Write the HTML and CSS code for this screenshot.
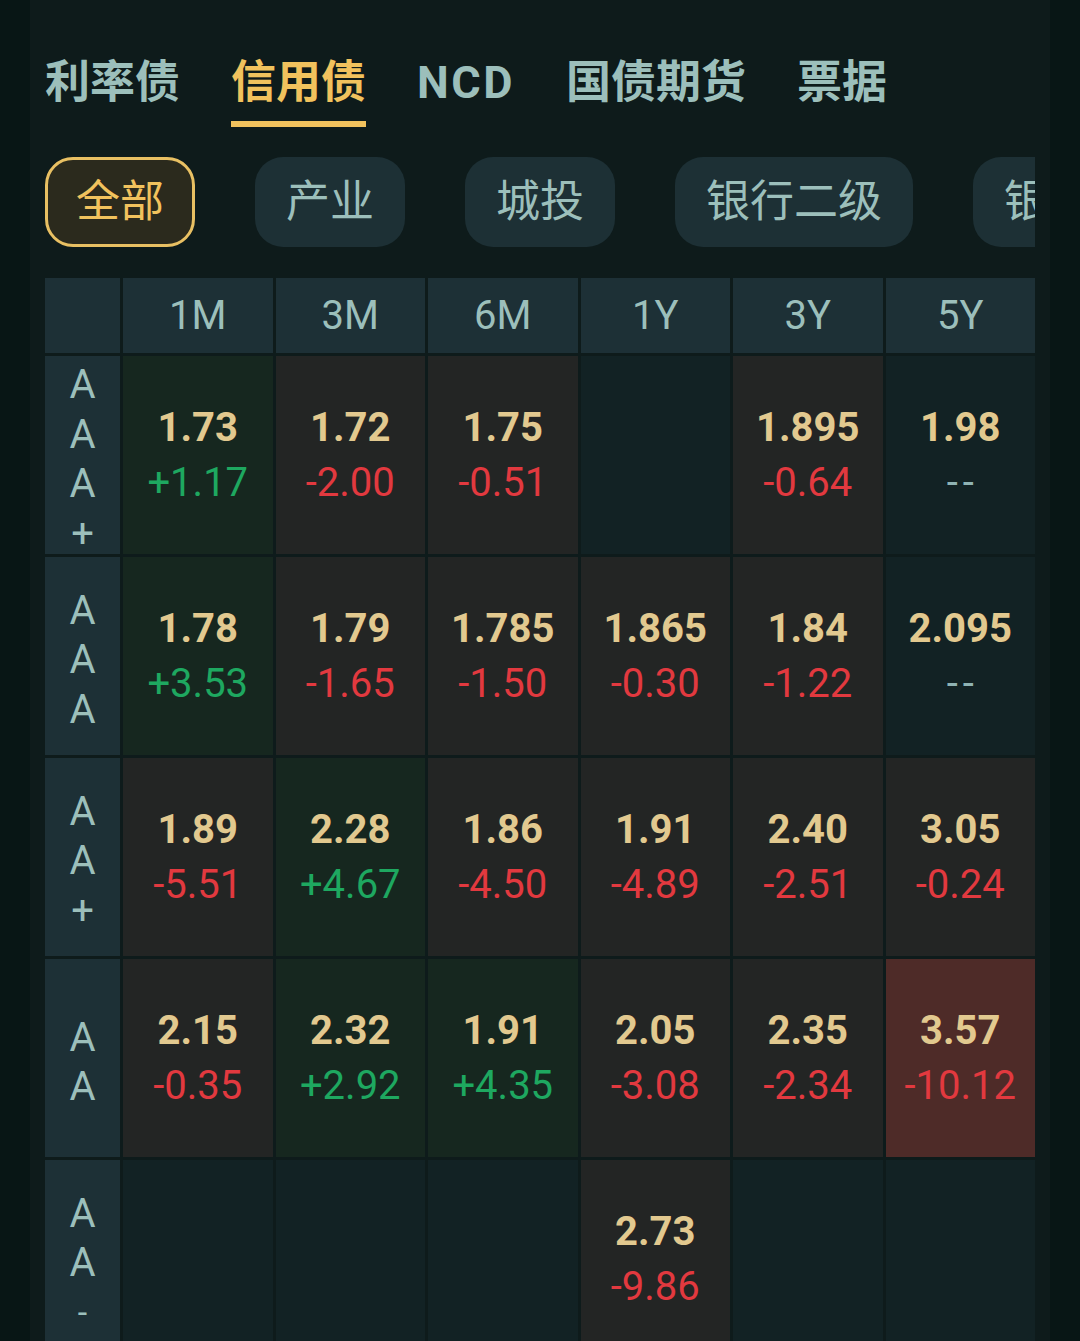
FILE: index.html
```html
<!DOCTYPE html>
<html lang="zh-CN">
<head>
    <meta charset="UTF-8">
    <meta name="viewport" content="width=device-width, initial-scale=1.0">
    <title>信用债</title>
    <link rel="stylesheet" href="styles.css">
</head>
<body>
<div class="screen">

    <!-- 顶部分类 -->
    <div class="tabs">
        <div class="tab">利率债</div>
        <div class="tab active">信用债</div>
        <div class="tab latin">NCD</div>
        <div class="tab">国债期货</div>
        <div class="tab">票据</div>
    </div>

    <!-- 子分类 -->
    <div class="chips">
        <div class="chip active">全部</div>
        <div class="chip">产业</div>
        <div class="chip">城投</div>
        <div class="chip">银行二级</div>
        <div class="chip">银行永续</div>
    </div>

    <!-- 收益率表 -->
    <div class="grid">
        <div class="head"></div>
        <div class="head">1M</div>
        <div class="head">3M</div>
        <div class="head">6M</div>
        <div class="head">1Y</div>
        <div class="head">3Y</div>
        <div class="head">5Y</div>

        <div class="rating"><span>A</span><span>A</span><span>A</span><span>+</span></div>
        <div class="cell up"><b>1.73</b><span class="g">+1.17</span></div>
        <div class="cell"><b>1.72</b><span class="r">-2.00</span></div>
        <div class="cell"><b>1.75</b><span class="r">-0.51</span></div>
        <div class="cell empty"></div>
        <div class="cell"><b>1.895</b><span class="r">-0.64</span></div>
        <div class="cell empty"><b>1.98</b><span class="na">--</span></div>

        <div class="rating"><span>A</span><span>A</span><span>A</span></div>
        <div class="cell up"><b>1.78</b><span class="g">+3.53</span></div>
        <div class="cell"><b>1.79</b><span class="r">-1.65</span></div>
        <div class="cell"><b>1.785</b><span class="r">-1.50</span></div>
        <div class="cell"><b>1.865</b><span class="r">-0.30</span></div>
        <div class="cell"><b>1.84</b><span class="r">-1.22</span></div>
        <div class="cell empty"><b>2.095</b><span class="na">--</span></div>

        <div class="rating"><span>A</span><span>A</span><span>+</span></div>
        <div class="cell"><b>1.89</b><span class="r">-5.51</span></div>
        <div class="cell up"><b>2.28</b><span class="g">+4.67</span></div>
        <div class="cell"><b>1.86</b><span class="r">-4.50</span></div>
        <div class="cell"><b>1.91</b><span class="r">-4.89</span></div>
        <div class="cell"><b>2.40</b><span class="r">-2.51</span></div>
        <div class="cell"><b>3.05</b><span class="r">-0.24</span></div>

        <div class="rating"><span>A</span><span>A</span></div>
        <div class="cell"><b>2.15</b><span class="r">-0.35</span></div>
        <div class="cell up"><b>2.32</b><span class="g">+2.92</span></div>
        <div class="cell up"><b>1.91</b><span class="g">+4.35</span></div>
        <div class="cell"><b>2.05</b><span class="r">-3.08</span></div>
        <div class="cell"><b>2.35</b><span class="r">-2.34</span></div>
        <div class="cell down"><b>3.57</b><span class="r">-10.12</span></div>

        <div class="rating"><span>A</span><span>A</span><span class="minus">-</span></div>
        <div class="cell empty"></div>
        <div class="cell empty"></div>
        <div class="cell empty"></div>
        <div class="cell"><b>2.73</b><span class="r">-9.86</span></div>
        <div class="cell empty"></div>
        <div class="cell empty"></div>
    </div>

</div>
</body>
</html>
```

FILE: styles.css
```css
html, body {
    margin: 0;
    background-color: #081615;
}
body {
    font-family: Roboto, "Noto Sans CJK SC", sans-serif;
    color: #9cbfbb;
    overflow: hidden;
    height: 1341px;
}
.screen {
    margin-left: 30px;
    width: 990px;
    min-height: 1341px;
    padding: 0 15px;
    background-color: #0e1b1b;
}

/* 顶部分类 */
.tabs {
    display: flex;
    gap: 51px;
    padding-top: 53px;
}
.tab {
    font-size: 45px;
    font-weight: 700;
    line-height: 60px;
    padding-bottom: 8px;
    border-bottom: 6px solid transparent;
}
.tab.latin {
    letter-spacing: 2.5px;
}
.tab.active {
    color: #f1c25d;
    border-bottom-color: #f1c25d;
}

/* 子分类 */
.chips {
    display: flex;
    gap: 60px;
    margin-top: 30px;
    overflow: hidden;
}
.chip {
    flex-shrink: 0;
    height: 90px;
    box-sizing: border-box;
    padding: 0 31px;
    border-radius: 28px;
    background-color: #1d3035;
    font-size: 44px;
    line-height: 90px;
}
.chip.active {
    line-height: 84px;
    padding: 0 28px;
    border: 3px solid #e8c063;
    background-color: #2b2a1d;
    color: #f1c25d;
}

/* 收益率表 */
.grid {
    display: grid;
    grid-template-columns: 75px repeat(6, 1fr);
    grid-template-rows: 75px repeat(5, 198px);
    gap: 3px;
    margin-top: 31px;
}
.head {
    background-color: #1d3036;
    font-size: 40px;
    line-height: 75px;
    text-align: center;
}
.rating {
    display: flex;
    flex-direction: column;
    justify-content: center;
    align-items: center;
    padding-top: 8px;
    box-sizing: border-box;
    background-color: #1d3036;
    font-size: 40px;
    line-height: 49.5px;
}
.rating .minus {
    font-size: 34px;
}
.cell {
    display: flex;
    flex-direction: column;
    justify-content: center;
    align-items: center;
    background-color: #232524;
    font-size: 40px;
    line-height: 55px;
}
.cell b {
    color: #e2c98f;
}
.cell.up {
    background-color: #16271f;
}
.cell.down {
    background-color: #4e2b28;
}
.cell.empty {
    background-color: #122224;
}
.g {
    color: #1ea860;
}
.r {
    color: #e2393f;
}
.na {
    color: #8fb3b3;
    letter-spacing: 5px;
    margin-right: -5px;
}
```
